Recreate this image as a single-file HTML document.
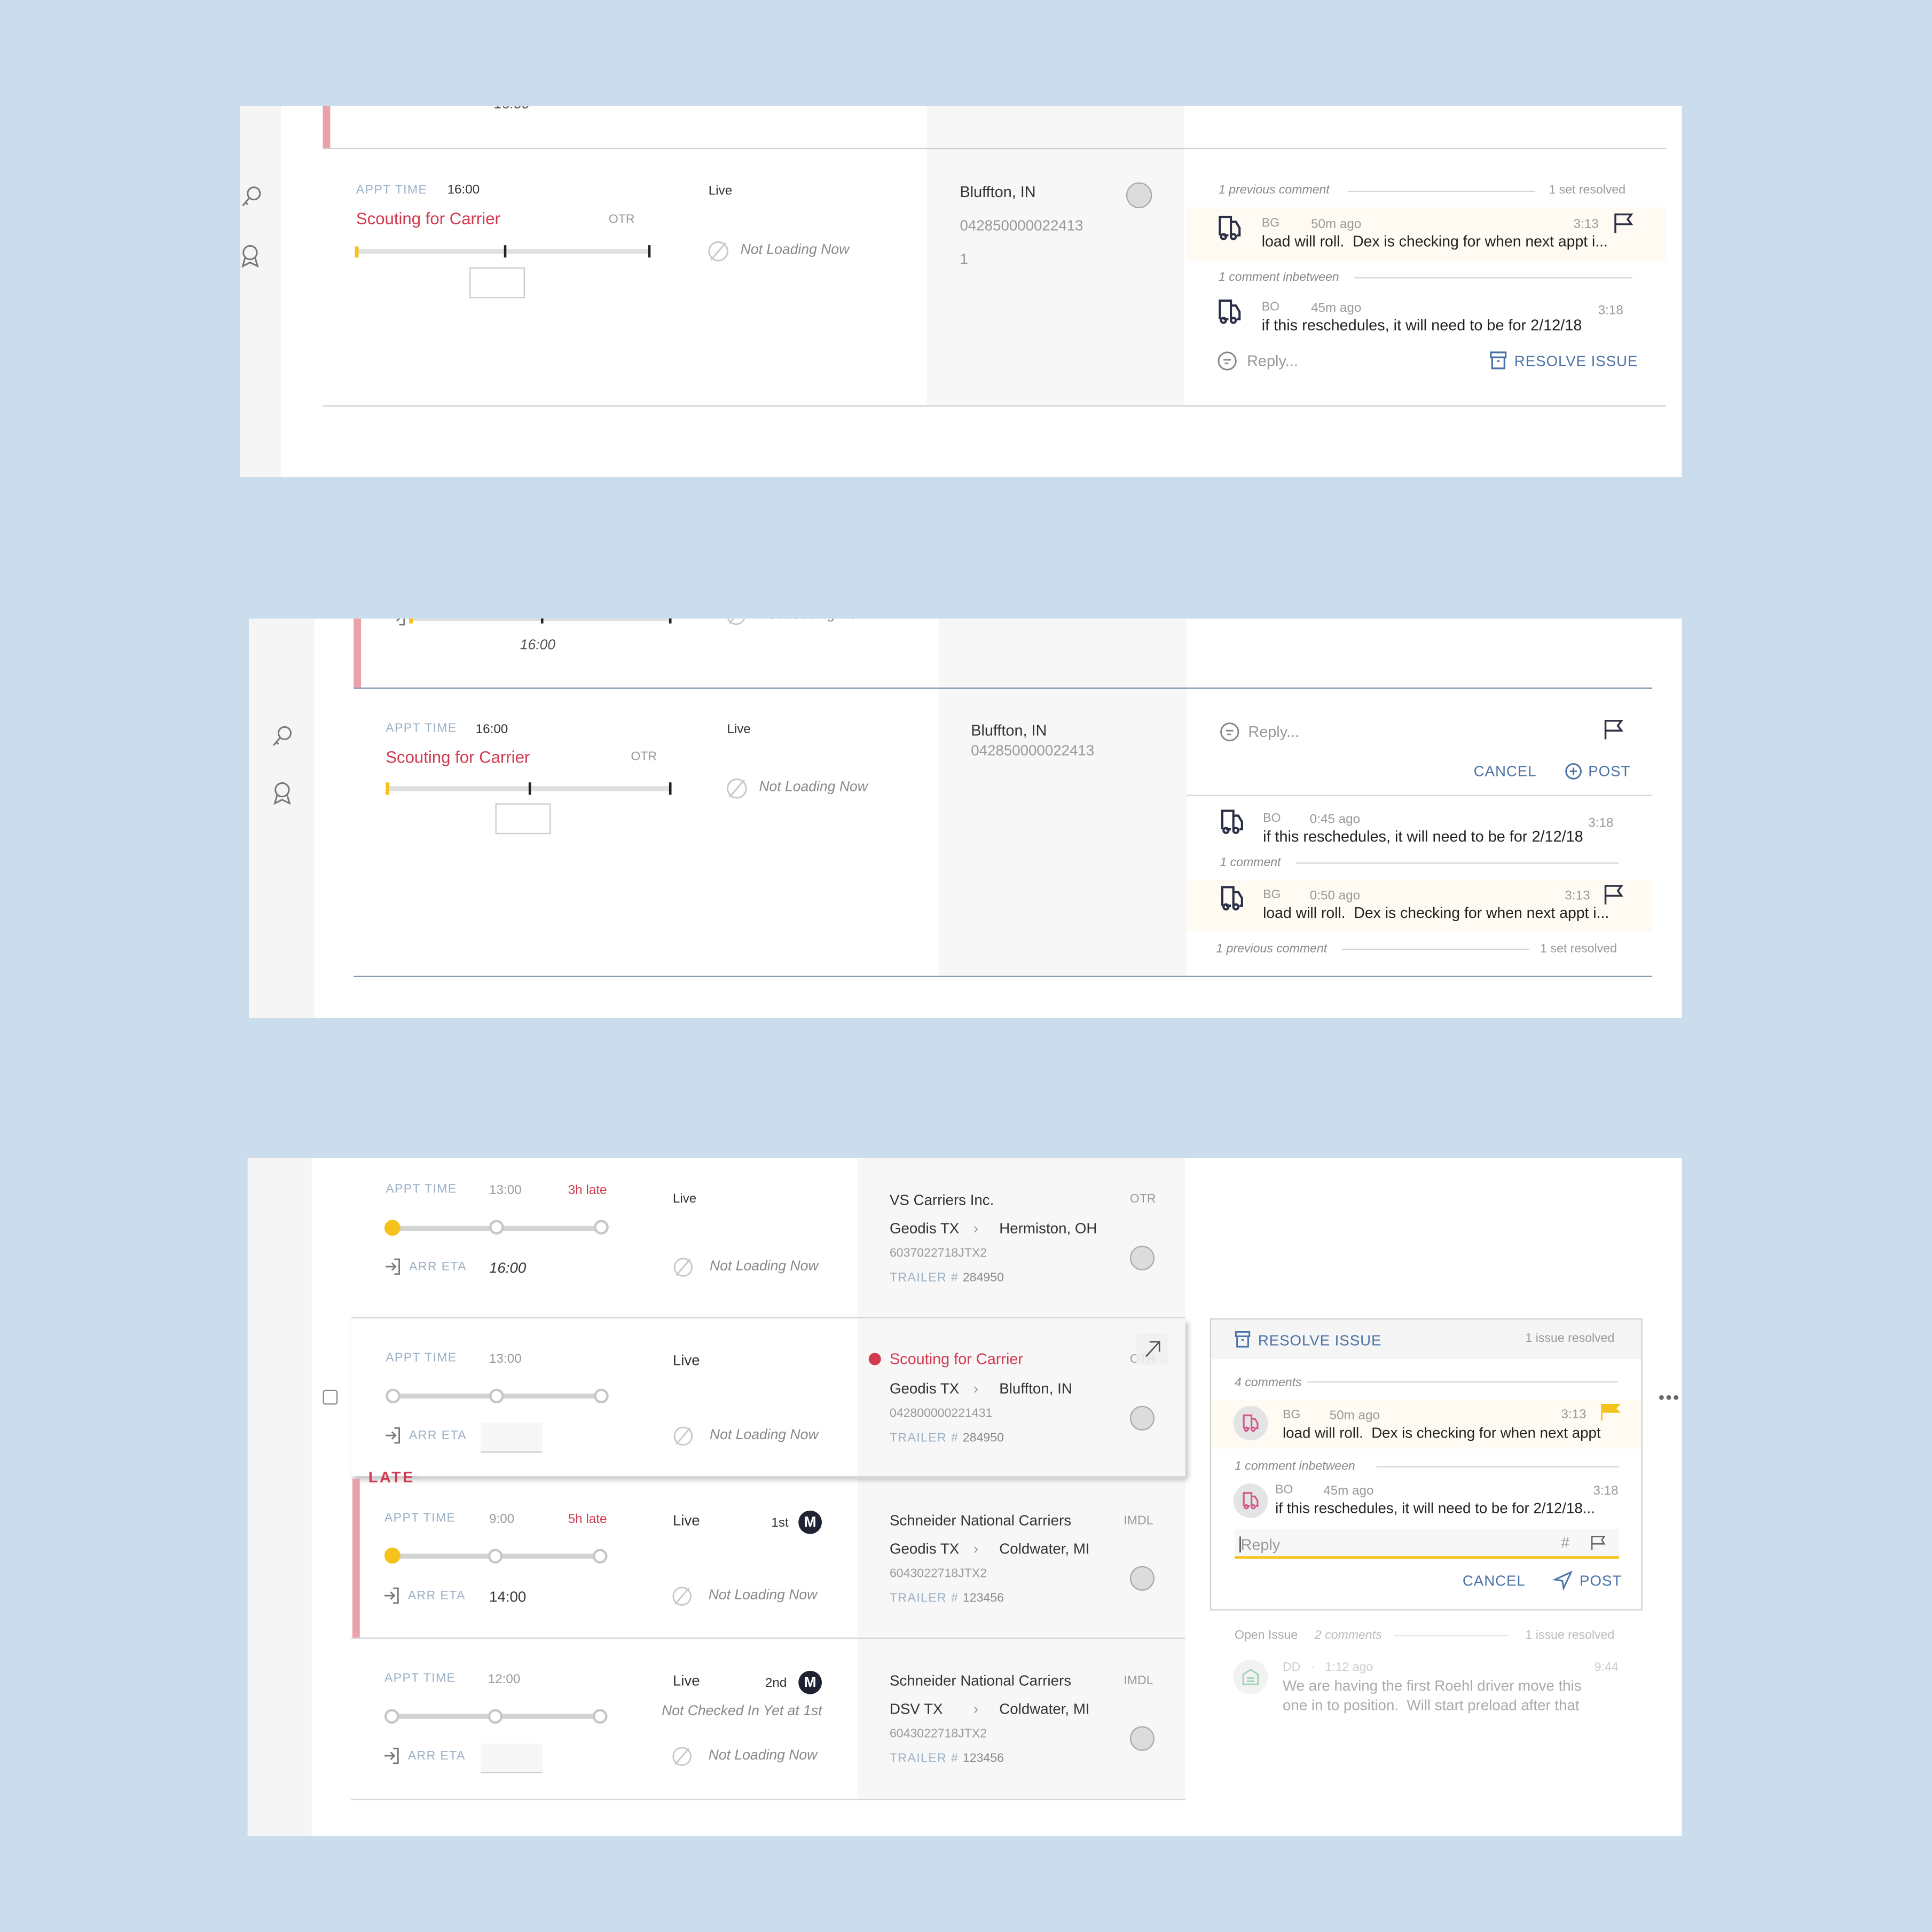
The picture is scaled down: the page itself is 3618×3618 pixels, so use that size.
<!DOCTYPE html>
<html><head><meta charset="utf-8">
<style>
html,body{margin:0;padding:0;}
body{width:3618px;height:3618px;background:#cbdcec;overflow:hidden;font-family:"Liberation Sans",sans-serif;}
#w{position:absolute;left:0;top:0;width:1568px;height:1568px;transform:scale(2.30740);transform-origin:0 0;}
.a{position:absolute;}
.t{position:absolute;white-space:nowrap;font-size:11.5px;color:#333;line-height:1;}
.lbl{color:#9ab0c6;font-size:10px;letter-spacing:.6px;}
.g{color:#999;}
.it{font-style:italic;color:#888;}
.red{color:#d23a4f;}
.blue{color:#4b72a6;letter-spacing:.4px;font-size:12px;}
.gc{position:absolute;background:#f7f7f7;}
.hl{position:absolute;height:1px;background:#d6d6d6;}
.circ{position:absolute;width:18px;height:18px;border-radius:50%;background:#dcdcdc;border:1px solid #aaa;box-sizing:border-box;}
.dot{position:absolute;width:12px;height:12px;border-radius:50%;background:#fff;border:2px solid #c8c8c8;box-sizing:border-box;}
.bar{position:absolute;height:4px;background:#d3d3d3;}
.cov{position:absolute;background:#cbdcec;}
svg{position:absolute;overflow:visible;}
</style></head><body><div id="w">

<!-- PANEL 1 -->
<div class="a" style="left:195px;top:86px;width:1170px;height:301px;background:#fff"></div>
<div class="a" style="left:195px;top:86px;width:33px;height:301px;background:#f5f5f5"></div>
<div class="gc" style="left:752px;top:86px;width:209px;height:243px"></div>
<div class="a" style="left:262px;top:86px;width:6px;height:34px;background:#e9a1aa"></div>
<div class="hl" style="left:262px;top:120px;width:1090px;background:#cfcfcf"></div>
<div class="hl" style="left:262px;top:329px;width:1090px;background:#cfcfcf"></div>
<div class="t it" style="left:401px;top:80px;color:#555">16:00</div>
<div class="cov" style="left:195px;top:60px;width:1170px;height:26px"></div>
<svg style="left:195px;top:150px" width="18" height="18" viewBox="0 0 18 18" fill="none" stroke="#777" stroke-width="1.3"><circle cx="11" cy="7" r="5"/><path d="M7 11 L2 17 M4 14 l2 2"/></svg>
<svg style="left:195px;top:198px" width="16" height="20" viewBox="0 0 16 20" fill="none" stroke="#777" stroke-width="1.3"><circle cx="8" cy="7" r="5.5"/><path d="M4 11 L2 18 L8 15 L14 18 L12 11"/></svg>
<div class="t lbl" style="left:289px;top:150px">APPT TIME</div>
<div class="t" style="left:363px;top:149px;font-size:10.5px">16:00</div>
<div class="t red" style="left:289px;top:171px;font-size:13.5px">Scouting for Carrier</div>
<div class="t g" style="left:494px;top:174px;font-size:10px">OTR</div>
<div class="bar" style="left:289px;top:202px;width:239px;background:#e0e0e0"></div>
<div class="a" style="left:288px;top:200px;width:3px;height:9px;background:#f5c21b"></div>
<div class="a" style="left:409px;top:199px;width:2px;height:10px;background:#222"></div>
<div class="a" style="left:526px;top:199px;width:2px;height:10px;background:#222"></div>
<div class="a" style="left:381px;top:217px;width:45px;height:25px;border:1px solid #ccc;box-sizing:border-box"></div>
<div class="t" style="left:575px;top:150px;font-size:10.5px">Live</div>
<svg style="left:574px;top:195px" width="18" height="18" viewBox="0 0 18 18" fill="none" stroke="#c8c8c8" stroke-width="1.3"><circle cx="9" cy="9" r="7.5"/><path d="M3 16 L15 2"/></svg>
<div class="t it" style="left:601px;top:198px;font-size:11.5px">Not Loading Now</div>
<div class="t" style="left:779px;top:150px;font-size:12.5px">Bluffton, IN</div>
<div class="t g" style="left:779px;top:177px;font-size:12px">042850000022413</div>
<div class="t g" style="left:779px;top:204px;font-size:12px">1</div>
<div class="circ" style="left:914px;top:148px;width:21px;height:21px"></div>
<div class="t it" style="left:989px;top:150px;font-size:10px">1 previous comment</div>
<div class="hl" style="left:1094px;top:155px;width:152px"></div>
<div class="t g" style="left:1257px;top:150px;font-size:10px">1 set resolved</div>
<div class="a" style="left:963px;top:168px;width:389px;height:44px;background:#fffaf2"></div>
<svg style="left:988px;top:175px" width="20" height="20" viewBox="0 0 20 20" fill="none" stroke="#2a2f45" stroke-width="1.8"><path d="M2 16 V1 H11 V16 M11 5 H15 L18 10 V16 H16 M5 16 H9"/><circle cx="5" cy="17" r="2"/><circle cx="13" cy="17" r="2"/></svg>
<div class="t g" style="left:1024px;top:177px;font-size:10px">BG</div>
<div class="t g" style="left:1064px;top:177px;font-size:10.5px">50m ago</div>
<div class="t g" style="left:1277px;top:177px;font-size:10.5px">3:13</div>
<svg style="left:1310px;top:173px" width="16" height="16" viewBox="0 0 16 16" fill="none" stroke="#2a2f45" stroke-width="1.5"><path d="M1 16 V1 H14 L11 5 L14 9 H1"/></svg>
<div class="t" style="left:1024px;top:190px;font-size:12.3px;color:#222">load will roll.&nbsp; Dex is checking for when next appt i...</div>
<div class="t it" style="left:989px;top:221px;font-size:10px">1 comment inbetween</div>
<div class="hl" style="left:1099px;top:225px;width:226px"></div>
<svg style="left:988px;top:243px" width="20" height="20" viewBox="0 0 20 20" fill="none" stroke="#2a2f45" stroke-width="1.8"><path d="M2 16 V1 H11 V16 M11 5 H15 L18 10 V16 H16 M5 16 H9"/><circle cx="5" cy="17" r="2"/><circle cx="13" cy="17" r="2"/></svg>
<div class="t g" style="left:1024px;top:245px;font-size:10px">BO</div>
<div class="t g" style="left:1064px;top:245px;font-size:10.5px">45m ago</div>
<div class="t g" style="left:1297px;top:247px;font-size:10.5px">3:18</div>
<div class="t" style="left:1024px;top:258px;font-size:12.5px;color:#222">if this reschedules, it will need to be for 2/12/18</div>
<svg style="left:988px;top:285px" width="16" height="16" viewBox="0 0 16 16" fill="none" stroke="#888" stroke-width="1.3"><circle cx="8" cy="8" r="7"/><path d="M5 7 H11 M6 10 H9"/></svg>
<div class="t g" style="left:1012px;top:287px;font-size:12.5px">Reply...</div>
<svg style="left:1209px;top:285px" width="14" height="15" viewBox="0 0 14 15" fill="none" stroke="#4b72a6" stroke-width="1.4"><rect x="1" y="1" width="12" height="4"/><path d="M2 5 V14 H12 V5 M6 8 H8"/></svg>
<div class="t blue" style="left:1229px;top:287px">RESOLVE ISSUE</div>

<!-- PANEL 2 -->
<div class="a" style="left:202px;top:502px;width:1163px;height:324px;background:#fff"></div>
<div class="a" style="left:202px;top:502px;width:53px;height:324px;background:#f5f5f5"></div>
<div class="gc" style="left:762px;top:502px;width:201px;height:291px"></div>
<div class="a" style="left:287px;top:502px;width:6px;height:56px;background:#e9a1aa"></div>
<div class="hl" style="left:287px;top:558px;width:1054px;background:#8496ad"></div>
<div class="hl" style="left:287px;top:792px;width:1054px;background:#8496ad"></div>
<div class="bar" style="left:333px;top:501px;width:212px;height:3px;background:#e0e0e0"></div>
<div class="a" style="left:332px;top:499px;width:3px;height:7px;background:#f5c21b"></div>
<div class="a" style="left:439px;top:499px;width:2px;height:7px;background:#222"></div>
<div class="a" style="left:543px;top:499px;width:2px;height:7px;background:#222"></div>
<svg style="left:316px;top:494px" width="14" height="14" viewBox="0 0 14 14" fill="none" stroke="#777" stroke-width="1.2"><path d="M8 1 H12 V13 H8 M1 7 H9 M6 4 L9 7 L6 10"/></svg>
<svg style="left:589px;top:491px" width="17" height="17" viewBox="0 0 18 18" fill="none" stroke="#c8c8c8" stroke-width="1.3"><circle cx="9" cy="9" r="7.5"/><path d="M3 16 L15 2"/></svg>
<div class="t it" style="left:616px;top:494px">Not Loading Now</div>
<div class="cov" style="left:202px;top:470px;width:1163px;height:32px"></div>
<div class="t it" style="left:422px;top:519px;color:#555">16:00</div>
<svg style="left:220px;top:588px" width="18" height="18" viewBox="0 0 18 18" fill="none" stroke="#777" stroke-width="1.3"><circle cx="11" cy="7" r="5"/><path d="M7 11 L2 17 M4 14 l2 2"/></svg>
<svg style="left:221px;top:634px" width="16" height="20" viewBox="0 0 16 20" fill="none" stroke="#777" stroke-width="1.3"><circle cx="8" cy="7" r="5.5"/><path d="M4 11 L2 18 L8 15 L14 18 L12 11"/></svg>
<div class="t lbl" style="left:313px;top:587px">APPT TIME</div>
<div class="t" style="left:386px;top:587px;font-size:10.5px">16:00</div>
<div class="t red" style="left:313px;top:608px;font-size:13.5px">Scouting for Carrier</div>
<div class="t g" style="left:512px;top:610px;font-size:10px">OTR</div>
<div class="bar" style="left:314px;top:638px;width:231px;background:#e0e0e0"></div>
<div class="a" style="left:313px;top:635px;width:3px;height:10px;background:#f5c21b"></div>
<div class="a" style="left:429px;top:635px;width:2px;height:10px;background:#222"></div>
<div class="a" style="left:543px;top:635px;width:2px;height:10px;background:#222"></div>
<div class="a" style="left:402px;top:652px;width:45px;height:25px;border:1px solid #ccc;box-sizing:border-box"></div>
<div class="t" style="left:590px;top:587px;font-size:10.5px">Live</div>
<svg style="left:589px;top:631px" width="18" height="18" viewBox="0 0 18 18" fill="none" stroke="#c8c8c8" stroke-width="1.3"><circle cx="9" cy="9" r="7.5"/><path d="M3 16 L15 2"/></svg>
<div class="t it" style="left:616px;top:634px">Not Loading Now</div>
<div class="t" style="left:788px;top:587px;font-size:12.5px">Bluffton, IN</div>
<div class="t g" style="left:788px;top:603px;font-size:12px">042850000022413</div>
<svg style="left:990px;top:586px" width="16" height="16" viewBox="0 0 16 16" fill="none" stroke="#888" stroke-width="1.3"><circle cx="8" cy="8" r="7"/><path d="M5 7 H11 M6 10 H9"/></svg>
<div class="t g" style="left:1013px;top:588px;font-size:12.5px">Reply...</div>
<svg style="left:1302px;top:584px" width="16" height="16" viewBox="0 0 16 16" fill="none" stroke="#2a2f45" stroke-width="1.5"><path d="M1 16 V1 H14 L11 5 L14 9 H1"/></svg>
<div class="t blue" style="left:1196px;top:620px">CANCEL</div>
<svg style="left:1270px;top:619px" width="14" height="14" viewBox="0 0 14 14" fill="none" stroke="#4b72a6" stroke-width="1.3"><circle cx="7" cy="7" r="6"/><path d="M7 4 V10 M4 7 H10"/></svg>
<div class="t blue" style="left:1289px;top:620px">POST</div>
<div class="hl" style="left:963px;top:645px;width:378px"></div>
<svg style="left:990px;top:657px" width="20" height="20" viewBox="0 0 20 20" fill="none" stroke="#2a2f45" stroke-width="1.8"><path d="M2 16 V1 H11 V16 M11 5 H15 L18 10 V16 H16 M5 16 H9"/><circle cx="5" cy="17" r="2"/><circle cx="13" cy="17" r="2"/></svg>
<div class="t g" style="left:1025px;top:660px;font-size:10px">BO</div>
<div class="t g" style="left:1063px;top:660px;font-size:10.5px">0:45 ago</div>
<div class="t g" style="left:1289px;top:663px;font-size:10.5px">3:18</div>
<div class="t" style="left:1025px;top:673px;font-size:12.5px;color:#222">if this reschedules, it will need to be for 2/12/18</div>
<div class="t it" style="left:990px;top:696px;font-size:10px">1 comment</div>
<div class="hl" style="left:1052px;top:700px;width:262px"></div>
<div class="a" style="left:963px;top:714px;width:378px;height:42px;background:#fffaf2"></div>
<svg style="left:990px;top:719px" width="20" height="20" viewBox="0 0 20 20" fill="none" stroke="#2a2f45" stroke-width="1.8"><path d="M2 16 V1 H11 V16 M11 5 H15 L18 10 V16 H16 M5 16 H9"/><circle cx="5" cy="17" r="2"/><circle cx="13" cy="17" r="2"/></svg>
<div class="t g" style="left:1025px;top:722px;font-size:10px">BG</div>
<div class="t g" style="left:1063px;top:722px;font-size:10.5px">0:50 ago</div>
<div class="t g" style="left:1270px;top:722px;font-size:10.5px">3:13</div>
<svg style="left:1302px;top:718px" width="16" height="16" viewBox="0 0 16 16" fill="none" stroke="#2a2f45" stroke-width="1.5"><path d="M1 16 V1 H14 L11 5 L14 9 H1"/></svg>
<div class="t" style="left:1025px;top:735px;font-size:12.3px;color:#222">load will roll.&nbsp; Dex is checking for when next appt i...</div>
<div class="t it" style="left:987px;top:766px;font-size:10px">1 previous comment</div>
<div class="hl" style="left:1089px;top:770px;width:152px"></div>
<div class="t g" style="left:1250px;top:766px;font-size:10px">1 set resolved</div>

<!-- PANEL 3 -->
<div class="a" style="left:201px;top:940px;width:1164px;height:550px;background:#fff"></div>
<div class="a" style="left:201px;top:940px;width:52px;height:550px;background:#f5f5f5"></div>
<div class="gc" style="left:696px;top:940px;width:266px;height:520px"></div>
<div class="hl" style="left:285px;top:1069px;width:677px"></div>
<div class="hl" style="left:285px;top:1329px;width:677px"></div>
<div class="hl" style="left:285px;top:1460px;width:677px"></div>
<!-- row 1 -->
<div class="t lbl" style="left:313px;top:961px">APPT TIME</div>
<div class="t g" style="left:397px;top:961px;font-size:10.5px">13:00</div>
<div class="t red" style="left:461px;top:961px;font-size:10.5px">3h late</div>
<div class="bar" style="left:319px;top:995px;width:168px"></div>
<div class="a" style="left:312px;top:990px;width:13px;height:13px;border-radius:50%;background:#f5c21b"></div>
<div class="dot" style="left:397px;top:990px"></div>
<div class="dot" style="left:482px;top:990px"></div>
<svg style="left:312px;top:1021px" width="14" height="14" viewBox="0 0 14 14" fill="none" stroke="#777" stroke-width="1.2"><path d="M8 1 H12 V13 H8 M1 7 H9 M6 4 L9 7 L6 10"/></svg>
<div class="t lbl" style="left:332px;top:1024px">ARR ETA</div>
<div class="t it" style="left:397px;top:1023px;color:#333;font-size:12px">16:00</div>
<div class="t" style="left:546px;top:968px;font-size:10.5px">Live</div>
<svg style="left:546px;top:1020px" width="17" height="17" viewBox="0 0 18 18" fill="none" stroke="#c8c8c8" stroke-width="1.3"><circle cx="9" cy="9" r="7.5"/><path d="M3 16 L15 2"/></svg>
<div class="t it" style="left:576px;top:1023px">Not Loading Now</div>
<div class="t" style="left:722px;top:968px;font-size:12px">VS Carriers Inc.</div>
<div class="t g" style="left:917px;top:969px;font-size:10px">OTR</div>
<div class="t" style="left:722px;top:991px;font-size:12px">Geodis TX</div>
<div class="t g" style="left:790px;top:991px;font-size:12px">›</div>
<div class="t" style="left:811px;top:991px;font-size:12px">Hermiston, OH</div>
<div class="t g" style="left:722px;top:1013px;font-size:10px">6037022718JTX2</div>
<div class="t lbl" style="left:722px;top:1033px">TRAILER # <span style="color:#888;letter-spacing:0">284950</span></div>
<div class="circ" style="left:917px;top:1011px;width:20px;height:20px"></div>
<!-- row 2 card -->
<div class="a" style="left:285px;top:1070px;width:677px;height:128px;background:#fff;box-shadow:2px 3px 4px rgba(0,0,0,.25)"></div>
<div class="gc" style="left:696px;top:1070px;width:266px;height:128px"></div>
<div class="a" style="left:262px;top:1128px;width:12px;height:12px;border:1px solid #888;border-radius:2px;box-sizing:border-box"></div>
<div class="t lbl" style="left:313px;top:1098px">APPT TIME</div>
<div class="t g" style="left:397px;top:1098px;font-size:10.5px">13:00</div>
<div class="bar" style="left:319px;top:1131px;width:168px"></div>
<div class="dot" style="left:313px;top:1127px"></div>
<div class="dot" style="left:397px;top:1127px"></div>
<div class="dot" style="left:482px;top:1127px"></div>
<svg style="left:312px;top:1158px" width="14" height="14" viewBox="0 0 14 14" fill="none" stroke="#777" stroke-width="1.2"><path d="M8 1 H12 V13 H8 M1 7 H9 M6 4 L9 7 L6 10"/></svg>
<div class="t lbl" style="left:332px;top:1161px">ARR ETA</div>
<div class="a" style="left:390px;top:1155px;width:50px;height:23px;background:#f7f7f7;border-bottom:1px solid #ccc"></div>
<div class="t" style="left:546px;top:1098px;font-size:12px">Live</div>
<svg style="left:546px;top:1157px" width="17" height="17" viewBox="0 0 18 18" fill="none" stroke="#c8c8c8" stroke-width="1.3"><circle cx="9" cy="9" r="7.5"/><path d="M3 16 L15 2"/></svg>
<div class="t it" style="left:576px;top:1160px">Not Loading Now</div>
<div class="a" style="left:705px;top:1098px;width:10px;height:10px;border-radius:50%;background:#d23a4f"></div>
<div class="t red" style="left:722px;top:1097px;font-size:12.5px">Scouting for Carrier</div>
<div class="t g" style="left:917px;top:1099px;font-size:10px">OTR</div>
<div class="a" style="left:922px;top:1082px;width:26px;height:26px;background:rgba(240,240,240,.85);border-radius:3px"></div>
<svg style="left:928px;top:1088px" width="14" height="14" viewBox="0 0 14 14" fill="none" stroke="#555" stroke-width="1.2"><path d="M2 13 L13 1 M5 1 H13 V9"/></svg>
<div class="t" style="left:722px;top:1121px;font-size:12px">Geodis TX</div>
<div class="t g" style="left:790px;top:1121px;font-size:12px">›</div>
<div class="t" style="left:811px;top:1121px;font-size:12px">Bluffton, IN</div>
<div class="t g" style="left:722px;top:1143px;font-size:10px">042800000221431</div>
<div class="t lbl" style="left:722px;top:1163px">TRAILER # <span style="color:#888;letter-spacing:0">284950</span></div>
<div class="circ" style="left:917px;top:1141px;width:20px;height:20px"></div>
<!-- LATE -->
<div class="a" style="left:286px;top:1200px;width:6px;height:129px;background:#e9a1aa"></div>
<div class="t red" style="left:299px;top:1193px;font-size:12.5px;letter-spacing:1.5px;font-weight:bold">LATE</div>
<div class="a" style="left:339px;top:1198px;width:623px;height:2px;background:#d6d6d6"></div>
<!-- row 3 -->
<div class="t lbl" style="left:312px;top:1228px">APPT TIME</div>
<div class="t g" style="left:397px;top:1228px;font-size:10.5px">9:00</div>
<div class="t red" style="left:461px;top:1228px;font-size:10.5px">5h late</div>
<div class="bar" style="left:318px;top:1261px;width:168px"></div>
<div class="a" style="left:312px;top:1256px;width:13px;height:13px;border-radius:50%;background:#f5c21b"></div>
<div class="dot" style="left:396px;top:1257px"></div>
<div class="dot" style="left:481px;top:1257px"></div>
<svg style="left:311px;top:1288px" width="14" height="14" viewBox="0 0 14 14" fill="none" stroke="#777" stroke-width="1.2"><path d="M8 1 H12 V13 H8 M1 7 H9 M6 4 L9 7 L6 10"/></svg>
<div class="t lbl" style="left:331px;top:1291px">ARR ETA</div>
<div class="t" style="left:397px;top:1290px;font-size:12px">14:00</div>
<div class="t" style="left:546px;top:1228px;font-size:12px">Live</div>
<div class="t" style="left:626px;top:1231px;font-size:10.5px">1st</div>
<div class="a" style="left:648px;top:1226px;width:19px;height:19px;border-radius:50%;background:#1f2233;color:#fff;font-size:12px;font-weight:bold;text-align:center;line-height:19px">M</div>
<svg style="left:545px;top:1287px" width="17" height="17" viewBox="0 0 18 18" fill="none" stroke="#c8c8c8" stroke-width="1.3"><circle cx="9" cy="9" r="7.5"/><path d="M3 16 L15 2"/></svg>
<div class="t it" style="left:575px;top:1290px">Not Loading Now</div>
<div class="t" style="left:722px;top:1228px;font-size:12px">Schneider National Carriers</div>
<div class="t g" style="left:912px;top:1230px;font-size:10px">IMDL</div>
<div class="t" style="left:722px;top:1251px;font-size:12px">Geodis TX</div>
<div class="t g" style="left:790px;top:1251px;font-size:12px">›</div>
<div class="t" style="left:811px;top:1251px;font-size:12px">Coldwater, MI</div>
<div class="t g" style="left:722px;top:1273px;font-size:10px">6043022718JTX2</div>
<div class="t lbl" style="left:722px;top:1293px">TRAILER # <span style="color:#888;letter-spacing:0">123456</span></div>
<div class="circ" style="left:917px;top:1271px;width:20px;height:20px"></div>
<!-- row 4 -->
<div class="t lbl" style="left:312px;top:1358px">APPT TIME</div>
<div class="t g" style="left:396px;top:1358px;font-size:10.5px">12:00</div>
<div class="bar" style="left:318px;top:1391px;width:168px"></div>
<div class="dot" style="left:312px;top:1387px"></div>
<div class="dot" style="left:396px;top:1387px"></div>
<div class="dot" style="left:481px;top:1387px"></div>
<svg style="left:311px;top:1418px" width="14" height="14" viewBox="0 0 14 14" fill="none" stroke="#777" stroke-width="1.2"><path d="M8 1 H12 V13 H8 M1 7 H9 M6 4 L9 7 L6 10"/></svg>
<div class="t lbl" style="left:331px;top:1421px">ARR ETA</div>
<div class="a" style="left:390px;top:1415px;width:50px;height:23px;background:#f7f7f7;border-bottom:1px solid #ccc"></div>
<div class="t" style="left:546px;top:1358px;font-size:12px">Live</div>
<div class="t" style="left:621px;top:1361px;font-size:10.5px">2nd</div>
<div class="a" style="left:648px;top:1356px;width:19px;height:19px;border-radius:50%;background:#1f2233;color:#fff;font-size:12px;font-weight:bold;text-align:center;line-height:19px">M</div>
<div class="t it" style="left:537px;top:1384px">Not Checked In Yet at 1st</div>
<svg style="left:545px;top:1417px" width="17" height="17" viewBox="0 0 18 18" fill="none" stroke="#c8c8c8" stroke-width="1.3"><circle cx="9" cy="9" r="7.5"/><path d="M3 16 L15 2"/></svg>
<div class="t it" style="left:575px;top:1420px">Not Loading Now</div>
<div class="t" style="left:722px;top:1358px;font-size:12px">Schneider National Carriers</div>
<div class="t g" style="left:912px;top:1360px;font-size:10px">IMDL</div>
<div class="t" style="left:722px;top:1381px;font-size:12px">DSV TX</div>
<div class="t g" style="left:790px;top:1381px;font-size:12px">›</div>
<div class="t" style="left:811px;top:1381px;font-size:12px">Coldwater, MI</div>
<div class="t g" style="left:722px;top:1403px;font-size:10px">6043022718JTX2</div>
<div class="t lbl" style="left:722px;top:1423px">TRAILER # <span style="color:#888;letter-spacing:0">123456</span></div>
<div class="circ" style="left:917px;top:1401px;width:20px;height:20px"></div>
<!-- issue panel -->
<div class="a" style="left:982px;top:1070px;width:351px;height:237px;border:1px solid #cfcfcf;box-sizing:border-box;background:#fff"></div>
<div class="a" style="left:983px;top:1071px;width:349px;height:32px;background:#f5f5f5"></div>
<svg style="left:1002px;top:1080px" width="13" height="14" viewBox="0 0 13 14" fill="none" stroke="#4b72a6" stroke-width="1.3"><rect x="1" y="1" width="11" height="3.5"/><path d="M2 4.5 V13 H11 V4.5 M5.5 7.5 H7.5"/></svg>
<div class="t blue" style="left:1021px;top:1082px">RESOLVE ISSUE</div>
<div class="t g" style="left:1238px;top:1082px;font-size:10px">1 issue resolved</div>
<div class="t it" style="left:1002px;top:1118px;font-size:10px">4 comments</div>
<div class="hl" style="left:1061px;top:1121px;width:252px"></div>
<div class="a" style="left:983px;top:1136px;width:349px;height:40px;background:#fffaf2"></div>
<div class="a" style="left:1001px;top:1141px;width:28px;height:28px;border-radius:50%;background:#e4e4e4"></div>
<svg style="left:1008px;top:1148px" width="14" height="14" viewBox="0 0 20 20" fill="none" stroke="#d2578a" stroke-width="2"><path d="M2 16 V1 H11 V16 M11 5 H15 L18 10 V16 H16 M5 16 H9"/><circle cx="5" cy="17" r="2"/><circle cx="13" cy="17" r="2"/></svg>
<div class="t g" style="left:1041px;top:1144px;font-size:10px">BG</div>
<div class="t g" style="left:1079px;top:1144px;font-size:10.5px">50m ago</div>
<div class="t g" style="left:1267px;top:1143px;font-size:10.5px">3:13</div>
<svg style="left:1299px;top:1139px" width="16" height="14" viewBox="0 0 16 14" fill="#f5c21b" stroke="#f5c21b" stroke-width="1.2"><path d="M1 14 V1 H15 L12 4 L15 7 H1 Z"/></svg>
<div class="t" style="left:1041px;top:1157px;font-size:12px;color:#222">load will roll.&nbsp; Dex is checking for when next appt</div>
<div class="t it" style="left:1002px;top:1186px;font-size:10px">1 comment inbetween</div>
<div class="hl" style="left:1117px;top:1190px;width:197px"></div>
<div class="a" style="left:1001px;top:1204px;width:28px;height:28px;border-radius:50%;background:#e4e4e4"></div>
<svg style="left:1008px;top:1211px" width="14" height="14" viewBox="0 0 20 20" fill="none" stroke="#d2578a" stroke-width="2"><path d="M2 16 V1 H11 V16 M11 5 H15 L18 10 V16 H16 M5 16 H9"/><circle cx="5" cy="17" r="2"/><circle cx="13" cy="17" r="2"/></svg>
<div class="t g" style="left:1035px;top:1205px;font-size:10px">BO</div>
<div class="t g" style="left:1074px;top:1205px;font-size:10.5px">45m ago</div>
<div class="t g" style="left:1293px;top:1205px;font-size:10.5px">3:18</div>
<div class="t" style="left:1035px;top:1218px;font-size:12px;color:#222">if this reschedules, it will need to be for 2/12/18...</div>
<div class="a" style="left:1002px;top:1241px;width:312px;height:22px;background:#f7f7f7;border-bottom:2px solid #f5c21b"></div>
<div class="a" style="left:1006px;top:1247px;width:1px;height:13px;background:#333"></div>
<div class="t g" style="left:1007px;top:1248px;font-size:12.5px">Reply</div>
<div class="t g" style="left:1267px;top:1246px;font-size:12px">#</div>
<svg style="left:1291px;top:1246px" width="12" height="12" viewBox="0 0 12 12" fill="none" stroke="#666" stroke-width="1.1"><path d="M1 12 V1 H11 L9 4 L11 7 H1"/></svg>
<div class="t blue" style="left:1187px;top:1277px">CANCEL</div>
<svg style="left:1261px;top:1275px" width="15" height="15" viewBox="0 0 15 15" fill="none" stroke="#4b72a6" stroke-width="1.3"><path d="M1 7 L14 1 L8 14 L7 8 Z"/></svg>
<div class="t blue" style="left:1282px;top:1277px">POST</div>
<div class="t" style="left:1002px;top:1323px;font-size:10px;color:#aaa">Open Issue</div>
<div class="t it" style="left:1067px;top:1323px;font-size:10px;color:#bbb">2 comments</div>
<div class="hl" style="left:1131px;top:1327px;width:93px;background:#e6e6e6"></div>
<div class="t" style="left:1238px;top:1323px;font-size:10px;color:#bbb">1 issue resolved</div>
<div class="a" style="left:1001px;top:1347px;width:28px;height:28px;border-radius:50%;background:#f2f2f2"></div>
<svg style="left:1008px;top:1354px" width="14" height="14" viewBox="0 0 14 14" fill="none" stroke="#9fd3b5" stroke-width="1.3"><path d="M1 5 L7 1 L13 5 V13 H1 Z M4 8 H10 M4 10.5 H10"/></svg>
<div class="t" style="left:1041px;top:1349px;font-size:10px;color:#ccc">DD &nbsp;&nbsp;·&nbsp;&nbsp; 1:12 ago</div>
<div class="t" style="left:1294px;top:1349px;font-size:10px;color:#ccc">9:44</div>
<div class="t" style="left:1041px;top:1362px;font-size:12px;color:#aaa">We are having the first Roehl driver move this</div>
<div class="t" style="left:1041px;top:1378px;font-size:12px;color:#aaa">one in to position.&nbsp; Will start preload after that</div>
<div class="t" style="left:1346px;top:1127px;font-size:14px;color:#666;letter-spacing:1px">•••</div>

</div></body></html>
